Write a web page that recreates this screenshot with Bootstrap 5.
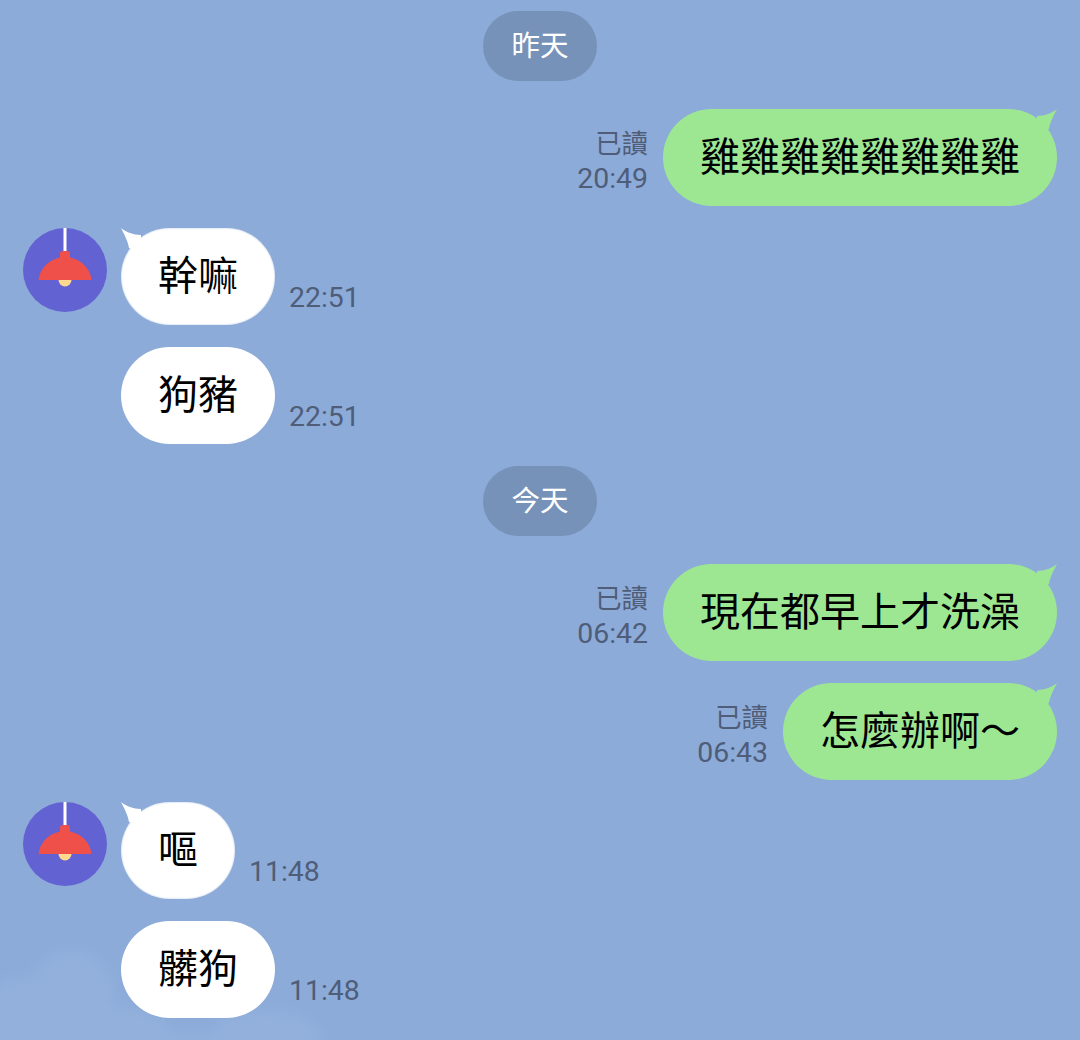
<!DOCTYPE html>
<html lang="zh-Hant">
<head>
<meta charset="utf-8">
<title>Chat</title>
<link href="https://cdn.jsdelivr.net/npm/bootstrap@5.3.0/dist/css/bootstrap.min.css" rel="stylesheet">
<style>
html, body { margin: 0; height: 1040px; overflow: hidden; background: #8cabd9; }
.chat-page { position: relative; height: 1040px; padding: 11px 23px 0; font-family: "Noto Sans CJK TC", "Liberation Sans", sans-serif; }
.sky { position: absolute; left: 0; bottom: 0; width: 400px; height: 110px; }
.chat-flow { position: relative; }
.day-row { margin-top: 22px; }
.day-row:first-child { margin-top: 0; }
.day-pill { width: 114px; height: 70px; border-radius: 35px; background: #7792b8; color: #fff; font-size: 28.5px; line-height: 66px; text-align: center; }
.msg-row { margin-top: 22px; }
.day-row + .msg-row { margin-top: 28px; }
.bubble { position: relative; height: 97px; padding: 0 37px; border-radius: 48.5px; font-size: 40px; line-height: 90px; color: #000; white-space: nowrap; }
.bubble-in { background: #fff; }
.bubble-edge { box-shadow: inset 0 0 2px #a9bfe0; }
.bubble-out { background: #9de793; }
.tail { position: absolute; top: 0; width: 28px; height: 24px; }
.tail-in { left: 0; }
.tail-out { right: 0; }
.face { width: 84px; height: 84px; flex: none; margin-right: 14px; }
.face-gap { width: 84px; flex: none; margin-right: 14px; }
.meta { margin-bottom: 9px; font-size: 28.4px; line-height: 36px; color: #4f5d78; font-family: Roboto, "Noto Sans CJK TC", sans-serif; }
.meta-in { margin-left: 14px; }
.meta-out { margin-right: 15px; text-align: right; }
.meta-read { font-size: 26.4px; line-height: 34px; margin-bottom: 2px; font-family: "Noto Sans CJK TC", sans-serif; }
</style>
</head>
<body>
<main class="chat-page">
  <svg class="sky" viewBox="0 0 400 110" aria-hidden="true">
    <defs><filter id="soft" x="-20%" y="-20%" width="140%" height="140%"><feGaussianBlur stdDeviation="6"/></filter></defs>
    <g fill="#93b0dc" filter="url(#soft)">
      <ellipse cx="72" cy="62" rx="42" ry="42"/>
      <ellipse cx="25" cy="85" rx="45" ry="38"/>
      <ellipse cx="110" cy="105" rx="60" ry="30"/>
      <ellipse cx="265" cy="112" rx="58" ry="32"/>
      <ellipse cx="180" cy="120" rx="60" ry="18"/>
    </g>
  </svg>
  <div class="chat-flow">
    <div class="day-row d-flex justify-content-center"><div class="day-pill">昨天</div></div>

    <div class="msg-row d-flex justify-content-end align-items-end">
      <div class="meta meta-out"><div class="meta-read">已讀</div><div>20:49</div></div>
      <div class="bubble bubble-out">雞雞雞雞雞雞雞雞
        <svg class="tail tail-out" viewBox="0 0 28 24"><path fill="#9de793" d="M28 0C23 4 16 7 8 7L8 24L20 20C21 13 25 6 28 0Z"/></svg>
      </div>
    </div>

    <div class="msg-row d-flex align-items-end">
      <svg class="face align-self-start" viewBox="0 0 84 84">
        <circle cx="42" cy="42" r="42" fill="#6262d2"/>
        <rect x="40.5" y="0" width="3" height="24" fill="#fff"/>
        <rect x="37" y="23" width="10" height="10" rx="3" fill="#ef5049"/>
        <path fill="#fdd98f" d="M35.5 52A6.5 6.5 0 0 0 48.5 52Z"/>
        <path fill="#ef5049" d="M15.5 52C17 38 30 29 42 29C54 29 67 38 68.5 52Z"/>
      </svg>
      <div class="bubble bubble-in bubble-edge">幹嘛
        <svg class="tail tail-in" viewBox="0 0 28 24"><path fill="#fff" d="M0 0C5 4 12 7 20 7L20 24L8 20C7 13 3 6 0 0Z"/></svg>
      </div>
      <div class="meta meta-in">22:51</div>
    </div>

    <div class="msg-row d-flex align-items-end">
      <div class="face-gap"></div>
      <div class="bubble bubble-in">狗豬</div>
      <div class="meta meta-in">22:51</div>
    </div>

    <div class="day-row d-flex justify-content-center"><div class="day-pill">今天</div></div>

    <div class="msg-row d-flex justify-content-end align-items-end">
      <div class="meta meta-out"><div class="meta-read">已讀</div><div>06:42</div></div>
      <div class="bubble bubble-out">現在都早上才洗澡
        <svg class="tail tail-out" viewBox="0 0 28 24"><path fill="#9de793" d="M28 0C23 4 16 7 8 7L8 24L20 20C21 13 25 6 28 0Z"/></svg>
      </div>
    </div>

    <div class="msg-row d-flex justify-content-end align-items-end">
      <div class="meta meta-out"><div class="meta-read">已讀</div><div>06:43</div></div>
      <div class="bubble bubble-out">怎麼辦啊～
        <svg class="tail tail-out" viewBox="0 0 28 24"><path fill="#9de793" d="M28 0C23 4 16 7 8 7L8 24L20 20C21 13 25 6 28 0Z"/></svg>
      </div>
    </div>

    <div class="msg-row d-flex align-items-end">
      <svg class="face align-self-start" viewBox="0 0 84 84">
        <circle cx="42" cy="42" r="42" fill="#6262d2"/>
        <rect x="40.5" y="0" width="3" height="24" fill="#fff"/>
        <rect x="37" y="23" width="10" height="10" rx="3" fill="#ef5049"/>
        <path fill="#fdd98f" d="M35.5 52A6.5 6.5 0 0 0 48.5 52Z"/>
        <path fill="#ef5049" d="M15.5 52C17 38 30 29 42 29C54 29 67 38 68.5 52Z"/>
      </svg>
      <div class="bubble bubble-in bubble-edge">嘔
        <svg class="tail tail-in" viewBox="0 0 28 24"><path fill="#fff" d="M0 0C5 4 12 7 20 7L20 24L8 20C7 13 3 6 0 0Z"/></svg>
      </div>
      <div class="meta meta-in">11:48</div>
    </div>

    <div class="msg-row d-flex align-items-end">
      <div class="face-gap"></div>
      <div class="bubble bubble-in">髒狗</div>
      <div class="meta meta-in">11:48</div>
    </div>
  </div>
</main>
<script src="https://cdn.jsdelivr.net/npm/bootstrap@5.3.0/dist/js/bootstrap.bundle.min.js"></script>
</body>
</html>
